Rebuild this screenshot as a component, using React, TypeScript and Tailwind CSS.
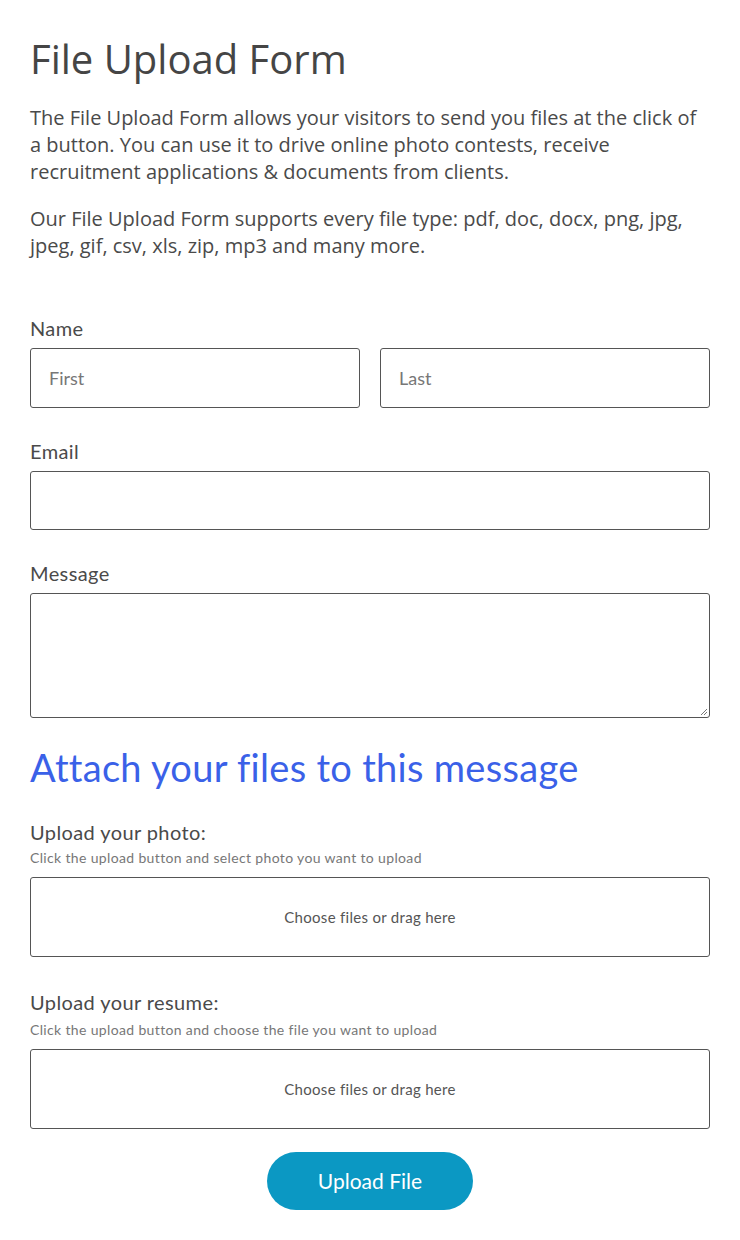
import React from "react";

const q = { fontFamily: "Lato, 'Noto Sans', sans-serif" };

function Label({ children }: { children: React.ReactNode }) {
  return (
    <div className="text-[20px] leading-[24px] tracking-[0.4px] text-[#4a4a4a]" style={q}>
      {children}
    </div>
  );
}

function Drop() {
  return (
    <div className="mt-[11px] h-[80px] rounded-[3px] border border-[#555] flex items-center justify-center">
      <span className="text-[15px] tracking-[0.3px] text-[#555]" style={q}>Choose files or drag here</span>
    </div>
  );
}

export default function App() {
  return (
    <div className="bg-white min-h-[1240px] px-[30px] pt-[34px] text-[#444]" style={{ fontFamily: "'Open Sans', sans-serif" }}>
      <h1 className="text-[40px] leading-[50px] text-[#454545] font-normal">File Upload Form</h1>
      <p className="mt-[20px] text-[20px] leading-[27px] text-[#4a4a4a]">
        The File Upload Form allows your visitors to send you files at the click of a button. You can use it to drive online photo contests, receive recruitment applications &amp; documents from clients.
      </p>
      <p className="mt-[20px] text-[20px] leading-[27px] text-[#4a4a4a]">
        Our File Upload Form supports every file type: pdf, doc, docx, png, jpg, jpeg, gif, csv, xls, zip, mp3 and many more.
      </p>

      <div className="mt-[57px]">
        <Label>Name</Label>
        <div className="mt-[8px] flex gap-[20px]">
          <div className="flex-1 h-[60px] rounded-[3px] border border-[#555] flex items-center px-[18px] text-[18px] text-[#777]" style={q}>First</div>
          <div className="flex-1 h-[60px] rounded-[3px] border border-[#555] flex items-center px-[18px] text-[18px] text-[#777]" style={q}>Last</div>
        </div>
      </div>

      <div className="mt-[31px]">
        <Label>Email</Label>
        <div className="mt-[8px] h-[59px] rounded-[3px] border border-[#555]" />
      </div>

      <div className="mt-[31px]">
        <Label>Message</Label>
        <div className="mt-[8px] h-[125px] rounded-[3px] border border-[#555] relative">
          <svg className="absolute right-[1px] bottom-[1px]" width="9" height="9" viewBox="0 0 9 9">
            <path d="M8 2 L2 8 M8 5 L5 8" stroke="#777" strokeWidth="1" />
          </svg>
        </div>
      </div>

      <h2 className="mt-[26px] text-[38px] leading-[46px] tracking-[0.3px] text-[#3a61e8]" style={q}>Attach your files to this message</h2>

      <div className="mt-[30px]">
        <Label>Upload your photo:</Label>
        <div className="mt-[6px] text-[14px] leading-[16px] tracking-[0.35px] text-[#777]" style={q}>Click the upload button and select photo you want to upload</div>
        <Drop />
      </div>

      <div className="mt-[33px]">
        <Label>Upload your resume:</Label>
        <div className="mt-[8px] text-[14px] leading-[16px] tracking-[0.35px] text-[#777]" style={q}>Click the upload button and choose the file you want to upload</div>
        <Drop />
      </div>

      <div className="mt-[23px] flex justify-center">
        <button className="w-[206px] h-[58px] rounded-full bg-[#0b98c3] text-white text-[21px]" style={q}>Upload File</button>
      </div>
    </div>
  );
}
